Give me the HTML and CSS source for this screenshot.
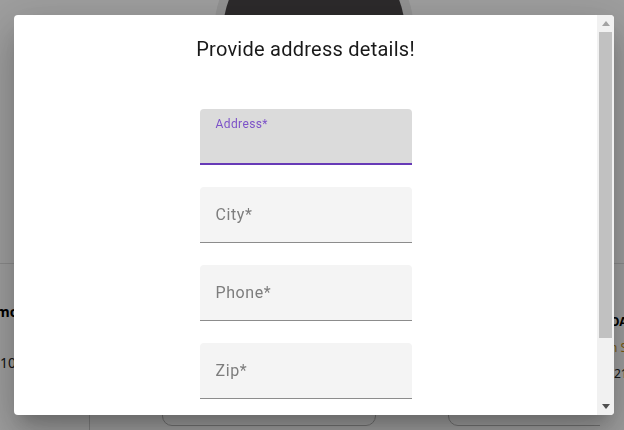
FILE: index.html
```
<!DOCTYPE html>
<html lang="en">
<head>
<meta charset="utf-8">
<title>Provide address details</title>
<link rel="stylesheet" href="styles.css">
</head>
<body>
<div class="page">
  <header class="hero">
    <div class="avatar-ring"><div class="avatar"></div></div>
  </header>
  <section class="content">
    <div class="col-left">
      <div class="cell-bold cell-shift">mode</div>
      <div class="cell">10</div>
    </div>
    <div class="col-center">
      <div class="card"></div>
      <div class="card card-right"></div>
    </div>
    <div class="col-right">
      <div class="cell-bold">OA</div>
      <div class="cell cell-orange">n S</div>
      <div class="cell cell-num">21</div>
    </div>
  </section>
</div>

<div class="overlay">
  <div class="dialog">
    <div class="dialog-body">
      <h2 class="dialog-title">Provide address details!</h2>
      <form class="form">
        <div class="field field-focused">
          <label class="field-label" for="address">Address*</label>
          <input class="field-input" id="address" type="text">
        </div>
        <div class="field">
          <input class="field-input" type="text" placeholder="City*">
        </div>
        <div class="field">
          <input class="field-input" type="text" placeholder="Phone*">
        </div>
        <div class="field">
          <input class="field-input" type="text" placeholder="Zip*">
        </div>
      </form>
    </div>
    <div class="scrollbar" aria-hidden="true">
      <div class="sb-btn">
        <svg width="8" height="5" viewBox="0 0 8 5"><path d="M0 5 L4 0 L8 5 Z" fill="#a3a3a3"/></svg>
      </div>
      <div class="sb-track"><div class="sb-thumb"></div></div>
      <div class="sb-btn">
        <svg width="8" height="5" viewBox="0 0 8 5"><path d="M0 0 L8 0 L4 5 Z" fill="#505050"/></svg>
      </div>
    </div>
  </div>
</div>
</body>
</html>
```
FILE: styles.css
```
* { box-sizing: border-box; }

html, body {
  margin: 0;
  padding: 0;
  height: 100%;
  overflow: hidden;
}

body {
  font-family: Roboto, "Noto Sans", sans-serif;
  background: #ffffff;
  color: #000;
}

/* ---------- underlying page ---------- */
.page {
  width: 624px;
  height: 430px;
  overflow: hidden;
}

.hero {
  height: 264px;
  border-bottom: 1px solid #e0e0e0;
  overflow: hidden;
  display: flex;
  justify-content: center;
}

.avatar-ring {
  width: 200px;
  height: 200px;
  margin-top: -68px;
  margin-left: 4px;
  border-radius: 50%;
  background: #ececec;
  display: flex;
  align-items: center;
  justify-content: center;
}

.avatar {
  width: 182px;
  height: 182px;
  border-radius: 50%;
  background: #484546;
}

.content {
  display: grid;
  grid-template-columns: 90px minmax(0, 1fr) 24px;
  height: 166px;
}

.col-left {
  border-right: 1px solid #d0d0d0;
  padding-top: 39px;
  overflow: hidden;
}

.col-left .cell-bold { margin-bottom: 33px; }

.cell-shift { margin-left: -4px; }

.cell-bold {
  font-family: "Noto Sans", sans-serif;
  font-weight: 700;
  font-size: 14px;
  line-height: 18px;
}

.cell {
  font-family: "Noto Sans", sans-serif;
  font-size: 14px;
  line-height: 18px;
  color: #222;
}

.col-center {
  display: flex;
  gap: 72px;
  padding: 132px 0 0 72px;
  overflow: hidden;
}

.card {
  width: 214px;
  height: 30px;
  border: 1px solid #b8b8b8;
  border-radius: 10px;
  flex: none;
}

.card-right { width: 200px; }

.col-right {
  padding-top: 50px;
  padding-left: 10px;
  display: flex;
  flex-direction: column;
  gap: 10px;
  white-space: nowrap;
  overflow: hidden;
}

.col-right .cell-bold,
.col-right .cell {
  font-size: 12px;
  line-height: 16px;
}

.cell-orange { color: #c8921a; }

.cell-num { margin-left: 4px; }

/* ---------- overlay + dialog ---------- */
.overlay {
  position: fixed;
  inset: 0;
  background: rgba(0, 0, 0, 0.38);
  display: flex;
  align-items: center;
  padding-left: 14px;
}

.dialog {
  width: 600px;
  height: 400px;
  background: #ffffff;
  border-radius: 4px;
  overflow: hidden;
  display: flex;
  box-shadow: 0 11px 15px -7px rgba(0,0,0,.2),
              0 24px 38px 3px rgba(0,0,0,.14),
              0 9px 46px 8px rgba(0,0,0,.12);
}

.dialog-body {
  flex: 1;
  min-width: 0;
  overflow: hidden;
  padding-top: 18px;
}

.scrollbar {
  width: 17px;
  flex: none;
  background: #f1f1f1;
  display: flex;
  flex-direction: column;
}

.sb-btn {
  height: 17px;
  flex: none;
  display: flex;
  align-items: center;
  justify-content: center;
}

.sb-btn svg { display: block; }

.sb-track {
  flex: 1;
  padding: 0 2px;
}

.sb-thumb {
  height: 306px;
  background: #c1c1c1;
}

.dialog-title {
  margin: 0;
  text-align: center;
  font-family: Roboto, sans-serif;
  font-weight: 400;
  font-size: 20px;
  line-height: 32px;
  letter-spacing: 0.25px;
  color: rgba(0, 0, 0, 0.9);
}

.form {
  margin: 44px auto 0;
  width: 212px;
  display: flex;
  flex-direction: column;
  gap: 22px;
}

.field {
  height: 56px;
  flex: none;
  background: #f4f4f4;
  border-radius: 4px 4px 0 0;
  border-bottom: 1px solid #8c8c8c;
  display: flex;
  flex-direction: column;
  justify-content: center;
}

.field-focused {
  background: #dbdbdb;
  border-bottom: 2px solid #673ab7;
  justify-content: flex-start;
  padding-top: 8px;
}

.field-label {
  display: block;
  padding-left: 16px;
  font-size: 12px;
  line-height: 14px;
  letter-spacing: 0.4px;
  color: #7c52c8;
}

.field-input {
  border: 0;
  outline: none;
  background: transparent;
  font-family: Roboto, sans-serif;
  font-size: 16px;
  letter-spacing: 0.6px;
  color: rgba(0, 0, 0, 0.87);
  padding: 0 16px;
  height: 24px;
  width: 100%;
}

.field-focused .field-input { margin-top: 6px; }

.field-input::placeholder {
  color: #7d7d7d;
  opacity: 1;
}
```
